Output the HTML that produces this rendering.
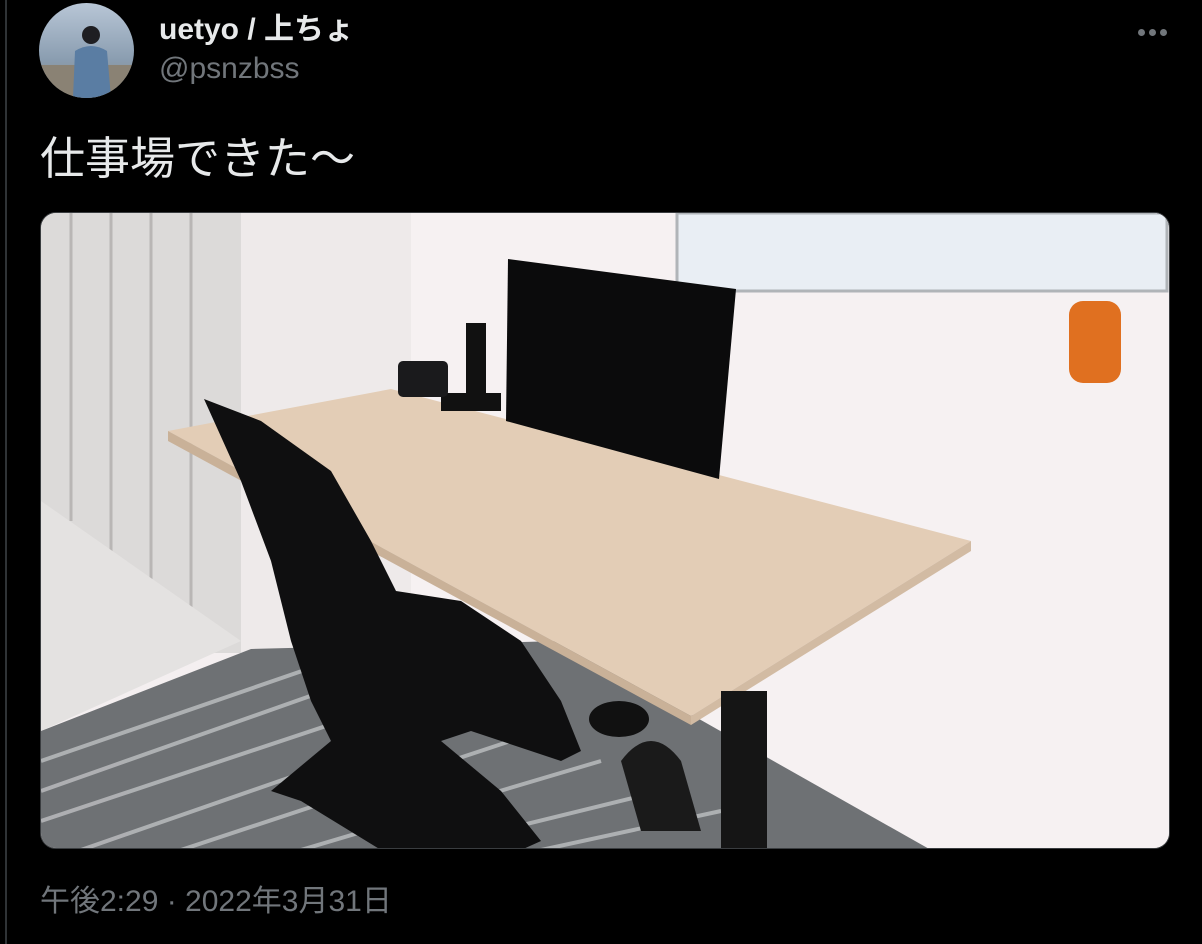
<!DOCTYPE html>
<html><head><meta charset="utf-8"><style>
html,body{margin:0;padding:0;background:#000;width:1202px;height:944px;overflow:hidden;font-family:"Liberation Sans","Noto Sans CJK JP",sans-serif}
.vl{position:absolute;left:5px;top:0;width:2px;height:944px;background:#2f3336}
.av{position:absolute;left:39px;top:3px;width:95px;height:95px;border-radius:50%;overflow:hidden;background:linear-gradient(#b8c6d6,#8a9db0 60%,#8d8578)}
.name{position:absolute;left:159px;top:12px;color:#e7e9ea;font-weight:bold;font-size:30px;line-height:36px}
.handle{position:absolute;left:159px;top:51px;color:#71767b;font-size:30px;line-height:36px}
.dots{position:absolute;left:1138px;top:23px}
.dots i{display:inline-block;width:7px;height:7px;border-radius:50%;background:#71767b;margin-right:4px}
.txt{position:absolute;left:40px;top:132px;color:#e7e9ea;font-size:45px;line-height:54px}
.photo{position:absolute;left:40px;top:212px;width:1128px;height:635px;border:1px solid #3a3d40;border-radius:16px;overflow:hidden}
.time{position:absolute;left:40px;top:884px;color:#71767b;font-size:30px;line-height:36px}
</style></head><body>
<div class="vl"></div>
<div class="av"><svg width="95" height="95"><rect y="62" width="95" height="33" fill="#8a8274"/><circle cx="52" cy="32" r="9" fill="#1e1e22"/><path d="M36 48 Q52 38 68 48 L72 95 L34 95 Z" fill="#5a7da3"/></svg></div>
<div class="name">uetyo / 上ちょ</div>
<div class="handle">@psnzbss</div>
<div class="dots"><i></i><i></i><i></i></div>
<div class="txt">仕事場できた〜</div>
<div class="photo">
<svg width="1128" height="635" viewBox="40 212 1128 635" preserveAspectRatio="none">
<rect x="40" y="212" width="1128" height="637" fill="#f4eff0"/>
<rect x="400" y="212" width="770" height="637" fill="#f6f1f2"/>
<rect x="160" y="212" width="250" height="440" fill="#eeeaea"/>
<rect x="40" y="212" width="200" height="440" fill="#dcdad9"/>
<path d="M70 212 V520 M110 212 V560 M150 212 V600 M190 212 V640" stroke="#b9b6b5" stroke-width="3"/>
<path d="M40 500 L240 640 L40 730 Z" fill="#e4e2e1"/>
<path d="M40 730 L250 648 L560 640 L930 849 L40 849 Z" fill="#6e7174"/>
<g stroke="#c9cbcd" stroke-width="4" opacity=".7">
<path d="M40 760 L330 660 M40 790 L380 670 M40 820 L430 690 M80 849 L480 710 M180 849 L540 730 M300 849 L600 760 M420 849 L660 790 M540 849 L720 810"/>
</g>
<rect x="676" y="212" width="490" height="78" fill="#e9eef4" stroke="#b0b4b8" stroke-width="3"/>
<rect x="1068" y="300" width="52" height="82" rx="14" fill="#e07020"/>
<path d="M167 430 L390 388 L970 540 L690 715 Z" fill="#e3cdb6"/>
<path d="M167 430 L690 715 L690 724 L167 440 Z" fill="#c9b198"/>
<path d="M690 715 L970 540 L970 550 L690 724 Z" fill="#d2bba3"/>
<path d="M507 258 L735 288 L718 478 L505 420 Z" fill="#0b0b0c"/>
<rect x="465" y="322" width="20" height="78" fill="#111"/>
<rect x="440" y="392" width="60" height="18" fill="#111"/>
<rect x="397" y="360" width="50" height="36" rx="5" fill="#1a1a1c"/>
<rect x="720" y="690" width="46" height="159" fill="#151515"/>
<path d="M203 398 L260 420 L330 470 L370 540 L395 590 L460 600 L520 640 L560 700 L580 750 L560 760 L470 730 L440 740 L500 790 L540 840 L520 849 L380 849 L300 800 L270 790 L330 740 L310 700 L290 640 L270 560 L240 480 Z" fill="#0f0f10"/>
<path d="M620 760 Q650 720 680 760 L700 830 L640 830 Z" fill="#1a1a1a"/>
<ellipse cx="618" cy="718" rx="30" ry="18" fill="#111"/>
</svg>
</div>
<div class="time">午後2:29 · 2022年3月31日</div>
</body></html>
